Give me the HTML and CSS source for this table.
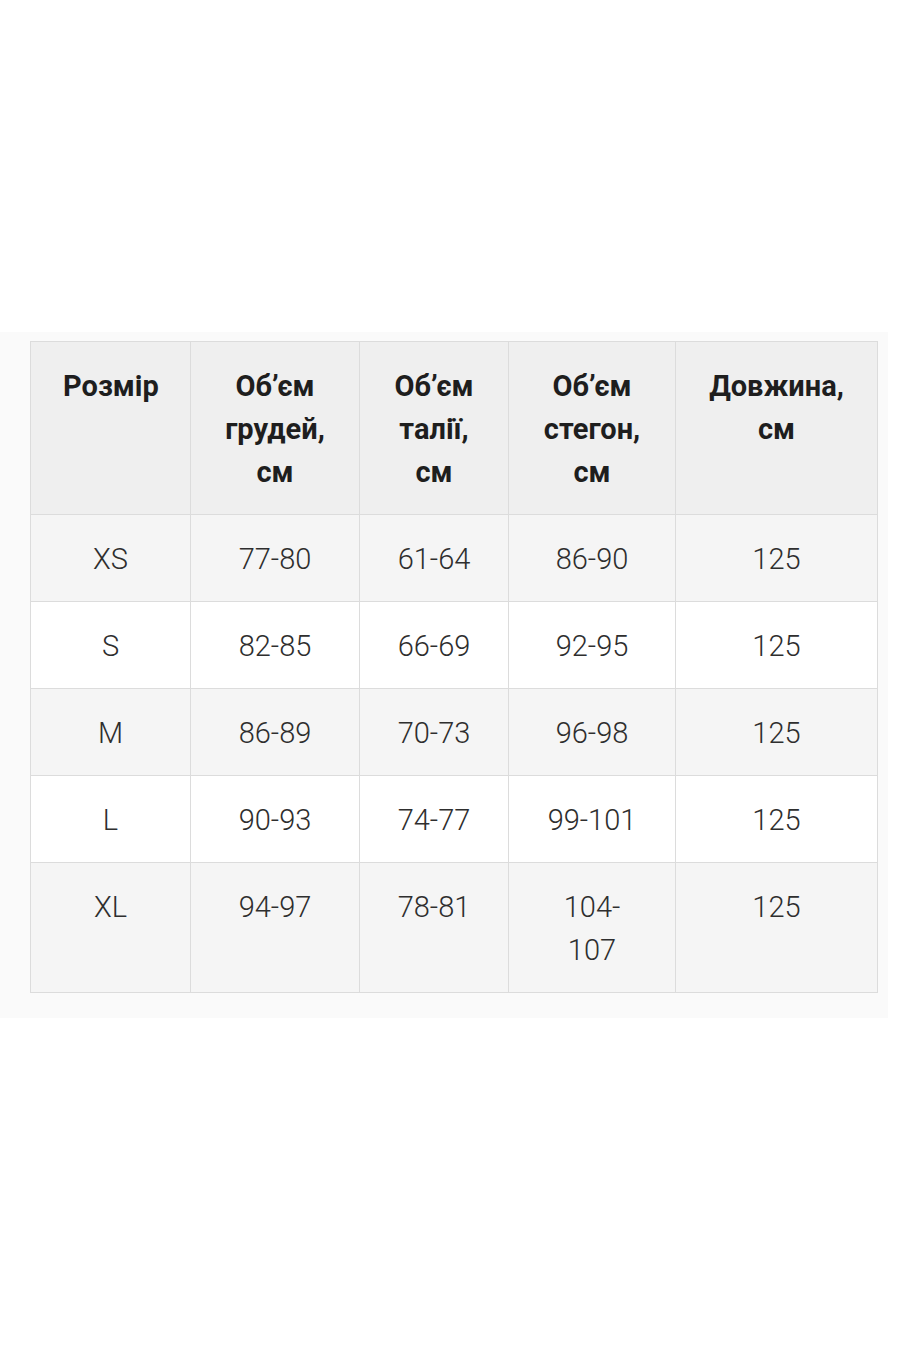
FILE: index.html
```html
<!DOCTYPE html>
<html lang="uk">
<head>
<meta charset="utf-8">
<title>Таблиця розмірів</title>
<link rel="stylesheet" href="styles.css">
</head>
<body>
<section class="band">
  <table class="sizes">
    <colgroup>
      <col class="c1"><col class="c2"><col class="c3"><col class="c4"><col class="c5">
    </colgroup>
    <thead>
      <tr>
        <th>Розмір</th>
        <th>Об’єм грудей, см</th>
        <th>Об’єм талії, см</th>
        <th>Об’єм стегон, см</th>
        <th>Довжина, см</th>
      </tr>
    </thead>
    <tbody>
      <tr class="odd"><td>XS</td><td>77-80</td><td>61-64</td><td>86-90</td><td>125</td></tr>
      <tr><td>S</td><td>82-85</td><td>66-69</td><td>92-95</td><td>125</td></tr>
      <tr class="odd"><td>M</td><td>86-89</td><td>70-73</td><td>96-98</td><td>125</td></tr>
      <tr><td>L</td><td>90-93</td><td>74-77</td><td>99-101</td><td>125</td></tr>
      <tr class="odd"><td>XL</td><td>94-97</td><td>78-81</td><td>104-107</td><td>125</td></tr>
    </tbody>
  </table>
</section>
</body>
</html>
```

FILE: styles.css
```css
html, body {
  margin: 0;
  padding: 0;
  background: #ffffff;
}

body {
  font-family: Roboto, "Liberation Sans", sans-serif;
}

.band {
  margin-top: 332px;
  width: 888px;
  background: #fafafa;
  padding: 9px 0 25px 30px;
  box-sizing: border-box;
}

.sizes {
  border-collapse: collapse;
  table-layout: fixed;
  width: 847px;
  font-size: 29px;
  line-height: 43px;
  color: #333;
}

.c1 { width: 160px; }
.c2 { width: 169px; }
.c3 { width: 149px; }
.c4 { width: 167px; }
.c5 { width: 202px; }

.sizes th,
.sizes td {
  border: 1px solid #dcdcdc;
  padding: 23px 32px 20px;
  text-align: center;
  vertical-align: top;
}

.sizes th {
  background: #efefef;
  font-weight: 700;
  color: #1e1e1e;
}

.sizes td {
  background: #ffffff;
  font-weight: 300;
  color: #2e2e2e;
}

.sizes tr.odd td {
  background: #f5f5f5;
}
```
